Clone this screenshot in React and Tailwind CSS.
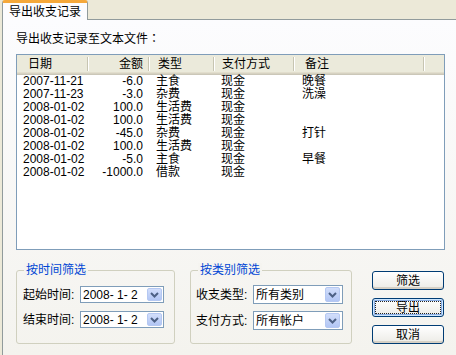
import React from 'react';

const rows = [
  { date: '2007-11-21', amount: '-6.0', type: '主食', pay: '现金', note: '晚餐' },
  { date: '2007-11-23', amount: '-3.0', type: '杂费', pay: '现金', note: '洗澡' },
  { date: '2008-01-02', amount: '100.0', type: '生活费', pay: '现金', note: '' },
  { date: '2008-01-02', amount: '100.0', type: '生活费', pay: '现金', note: '' },
  { date: '2008-01-02', amount: '-45.0', type: '杂费', pay: '现金', note: '打针' },
  { date: '2008-01-02', amount: '100.0', type: '生活费', pay: '现金', note: '' },
  { date: '2008-01-02', amount: '-5.0', type: '主食', pay: '现金', note: '早餐' },
  { date: '2008-01-02', amount: '-1000.0', type: '借款', pay: '现金', note: '' },
];

const cols = 'grid grid-cols-[72px_61px_65px_80px_130px_1fr]';

const Sep = () => (
  <div className="w-[2px] h-[14px] self-center border-l border-[#c7c5b2] bg-white shrink-0" />
);

const HeadCell = ({ children, className = '', sep = true }) => (
  <div className="flex h-full">
    <div className={`flex-1 flex items-center ${className}`}>{children}</div>
    {sep && <Sep />}
  </div>
);

const ArrowBtn = ({ className = '' }) => (
  <div className={`rounded-[2px] border border-[#b5c8f2] bg-gradient-to-b from-[#d2defb] to-[#b2c6f4] flex items-center justify-center shrink-0 ${className}`}>
    <svg width="9" height="6" viewBox="0 0 9 6">
      <path d="M1 1 L4.5 4.5 L8 1" fill="none" stroke="#4d6185" strokeWidth="2" />
    </svg>
  </div>
);

const XpButton = ({ children, isDefault }) => (
  <button
    className={`relative h-[19px] w-[72px] rounded-[3px] border border-[#003c74] bg-gradient-to-b from-white to-[#ecebe6] flex items-center justify-center leading-none ${
      isDefault
        ? 'shadow-[inset_0_0_0_1px_#cee7ff,inset_0_0_0_2px_#89ade4]'
        : 'shadow-[inset_0_-2px_0_#d6d0c5]'
    }`}
  >
    {isDefault && <span className="absolute inset-[2px] border border-dotted border-[#222]" />}
    <span className="relative">{children}</span>
  </button>
);

export default function App() {
  return (
    <div className="w-[456px] h-[355px] bg-[#ece9d8] flex flex-col overflow-hidden text-[12px] text-black font-['Liberation_Sans','Noto_Sans_CJK_SC',sans-serif]">
      {/* tab strip */}
      <div className="h-[19px] shrink-0 flex items-start pl-[2px]">
        <div className="relative z-10 h-[20px] w-[86px] rounded-t-[3px] border-x border-[#919b9c] border-t-[3px] border-t-[#f5a83a] bg-[#fcfcfe] flex items-center pl-[6px] leading-none">
          导出收支记录
        </div>
      </div>

      {/* page */}
      <div className="flex-1 ml-[2px] border-l border-t border-[#919b9c] bg-gradient-to-b from-[#fcfcfe] to-[#f4f3ee] pl-[13px] flex flex-col">
        <div className="mt-[11px] h-[14px] leading-[14px]">
          导出收支记录至文本文件<span className="font-['Noto_Sans_CJK_TC',sans-serif]">：</span>
        </div>

        {/* list */}
        <div className="mt-[9px] w-[429px] h-[196px] border border-[#7f9db9] bg-white flex flex-col">
          <div className={`${cols} h-[20px] bg-[#ebeadb] shadow-[inset_0_-1px_0_#cbc7b8,inset_0_-2px_0_#d6d2c2,inset_0_-3px_0_#e2decd] pb-[3px]`}>
            <HeadCell className="pl-[11px]">日期</HeadCell>
            <HeadCell className="justify-end pr-[5px]">金额</HeadCell>
            <HeadCell className="pl-[8px]">类型</HeadCell>
            <HeadCell className="pl-[7px]">支付方式</HeadCell>
            <HeadCell className="pl-[10px]">备注</HeadCell>
            <HeadCell sep={false} />
          </div>
          {rows.map((r, i) => (
            <div key={i} className={`${cols} h-[13px] leading-[13px]`}>
              <div className="pl-[6px]">{r.date}</div>
              <div className="text-right pr-[7px]">{r.amount}</div>
              <div className="pl-[6px]">{r.type}</div>
              <div className="pl-[6px]">{r.pay}</div>
              <div className="pl-[7px]">{r.note}</div>
              <div />
            </div>
          ))}
        </div>

        {/* bottom controls */}
        <div className="mt-[20px] flex items-start">
          {/* time filter */}
          <div className="relative w-[159px] h-[74px] rounded-[3px] border border-[#d0d0bf] pt-[15px] pl-[6px] flex flex-col gap-[8px]">
            <span className="absolute -top-[8px] left-[7px] px-[2px] bg-[#f5f4f0] text-[#0046d5] leading-[14px]">按时间筛选</span>
            {['起始时间:', '结束时间:'].map((label) => (
              <div key={label} className="flex items-center h-[17px]">
                <span className="w-[57px]">{label}</span>
                <div className="w-[84px] h-[17px] border border-[#7f9db9] bg-white flex items-center justify-between pl-[2px] pr-[1px]">
                  <span className="whitespace-pre leading-none">2008- 1- 2</span>
                  <ArrowBtn className="w-[15px] h-[13px]" />
                </div>
              </div>
            ))}
          </div>

          {/* category filter */}
          <div className="relative ml-[15px] w-[162px] h-[74px] rounded-[3px] border border-[#d0d0bf] pt-[14px] pl-[5px] flex flex-col gap-[7px]">
            <span className="absolute -top-[8px] left-[7px] px-[2px] bg-[#f5f4f0] text-[#0046d5] leading-[14px]">按类别筛选</span>
            {[
              ['收支类型:', '所有类别'],
              ['支付方式:', '所有帐户'],
            ].map(([label, value]) => (
              <div key={label} className="flex items-center h-[19px]">
                <span className="w-[57px]">{label}</span>
                <div className="w-[90px] h-[19px] border border-[#7f9db9] bg-white flex items-center justify-between pl-[2px] pr-[2px]">
                  <span className="leading-none">{value}</span>
                  <ArrowBtn className="w-[15px] h-[15px]" />
                </div>
              </div>
            ))}
          </div>

          {/* buttons */}
          <div className="ml-[20px] mt-[1px] flex flex-col gap-[8px]">
            <XpButton>筛选</XpButton>
            <XpButton isDefault>导出</XpButton>
            <XpButton>取消</XpButton>
          </div>
        </div>
      </div>
    </div>
  );
}
